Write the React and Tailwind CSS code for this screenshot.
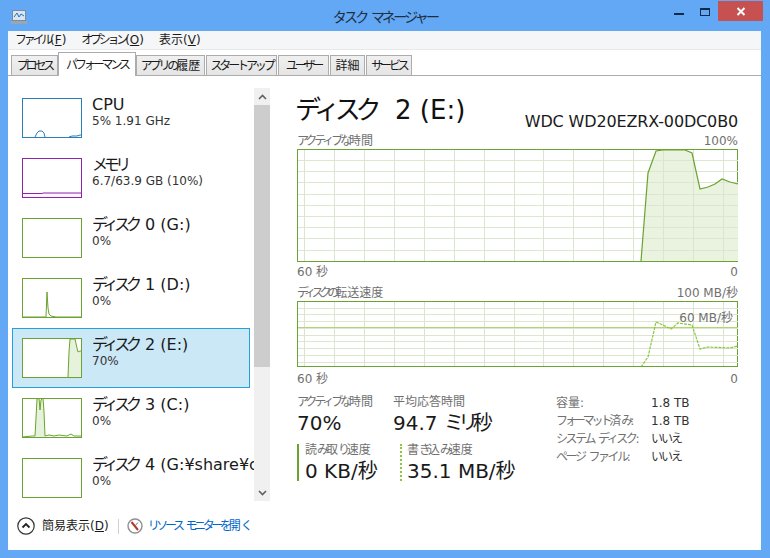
import React from "react";

const FONT = '"DejaVu Sans", "Noto Sans CJK JP", sans-serif';
const DISK = "#6aa32f";

/* The reference's Japanese UI face has condensed kana: tighten only the kana runs. */
function J({ children, cls = "tracking-[-0.26em]" }) {
  const parts = String(children).split(/([\u3040-\u30ff]+)/);
  return (
    <>
      {parts.map((p, i) =>
        i % 2 ? (
          <span key={i} className={cls}>{p}</span>
        ) : (
          <span key={i}>{p}</span>
        )
      )}
    </>
  );
}

const tabs = [
  { t: "プロセス", w: "w-[47px]" },
  { t: "パフォーマンス", w: "w-[78px]", active: true },
  { t: "アプリの履歴", w: "w-[69px]" },
  { t: "スタートアップ", w: "w-[71px]" },
  { t: "ユーザー", w: "w-[51px]" },
  { t: "詳細", w: "w-[35px]" },
  { t: "サービス", w: "w-[46px]" },
];

const items = [
  { n: "CPU", s: "5% 1.91 GHz", c: "#2a7fb5", p: "M13 39 L15 35 L17 33 L20 33 L22 35 L23 39", p2: "M47 39 L50 38 L55 38 L58 37 L60 37" },
  { n: "メモリ", s: "6.7/63.9 GB (10%)", c: "#8e24aa", line: true },
  { n: "ディスク 0 (G:)", s: "0%", c: DISK },
  { n: "ディスク 1 (D:)", s: "0%", c: DISK, p: "M0 39 L22 39 L24 39 L25 14 L26 30 L27 36 L29 38 L34 39 L60 39" },
  { n: "ディスク 2 (E:)", s: "70%", c: DISK, sel: true, p: "M46 39 L47 14 L48 1 L53 1 L55 10 L56 14 L58 13 L60 13", area: "M46 39 L47 14 L48 1 L53 1 L55 10 L56 14 L58 13 L60 13 L60 39 Z" },
  { n: "ディスク 3 (C:)", s: "0%", c: DISK, p: "M0 39 L10 38 L13 38 L14 20 L15 1 L17 0 L18 12 L19 2 L21 0 L22 14 L23 38 L27 37 L32 38 L37 37 L45 38 L49 36 L52 38 L60 38", area: "M13 39 L14 20 L15 1 L17 0 L18 12 L19 2 L21 0 L22 14 L23 39 Z" },
  { n: "ディスク 4 (G:¥share¥c", s: "0%", c: DISK },
];

function Thumb({ it }) {
  return (
    <div className="w-[60px] h-10 border shrink-0 bg-white" style={{ borderColor: it.c }}>
      <svg width="58" height="38" viewBox="1 1 58 38" className="block">
        {it.area && <path d={it.area} fill="#e7f2dd" />}
        {it.p && <path d={it.p} fill="none" stroke={it.c} strokeWidth="1" />}
        {it.p2 && <path d={it.p2} fill="none" stroke={it.c} strokeWidth="1" />}
        {it.line && (
          <>
            <rect x="1" y="35" width="58" height="4" fill="#fbf5fd" />
            <path d="M1 35.5 L20 35.5 L21 35 L59 35" fill="none" stroke={it.c} strokeWidth="1" />
          </>
        )}
      </svg>
    </div>
  );
}

function Item({ it }) {
  return (
    <div className={`w-[238px] h-[60px] flex items-start pl-[10px] pt-[10px] gap-[10px] border ${it.sel ? "bg-[#cbe8f6] border-[#26a0da]" : "border-transparent"}`}>
      <div className="-mt-px -ml-px"><Thumb it={it} /></div>
      <div className="-mt-[4px]">
        <div className="text-[16px] leading-[20px] text-[#1a1a1a] whitespace-nowrap"><J cls="tracking-[-0.27em] mr-[0.15em]">{it.n}</J></div>
        <div className="text-[12px] leading-[13px] text-[#333] whitespace-nowrap">{it.s}</div>
      </div>
    </div>
  );
}

const vLines = Array.from({ length: 15 }, (_, i) => 6.5 + Math.round(i * 29.93));

function Grid({ w, h, hStart, hStep, hCount }) {
  return (
    <>
      {Array.from({ length: hCount }, (_, i) => {
        const y = Math.round(hStart + i * hStep) + 0.5;
        return <line key={i} x1="0" x2={w} y1={y} y2={y} stroke="#dde6cf" />;
      })}
      {vLines.map((x) => (
        <line key={x} x1={x} x2={x} y1="0" y2={h} stroke="#dbe3d2" />
      ))}
    </>
  );
}

function ActiveGraph() {
  const pts = [[641,261],[648,173],[656,151],[663,150],[685,150],[692,153],[700,189],[708,187],[715,184],[722,179],[730,182],[738,184]]
    .map(([x, y]) => `${x - 298},${y - 150}`).join(" L");
  return (
    <div className="h-[113px] border border-[#6aa32f]">
      <svg width="440" height="111" className="block">
        <path d={`M${pts} L440,112 L343,112 Z`} fill="#e9f3df" />
        <Grid w={440} h={111} hStart={10} hStep={11.2} hCount={9} />
        <path d={`M${pts}`} fill="none" stroke="#6aa32f" strokeWidth="1.2" />
      </svg>
    </div>
  );
}

function SpeedGraph() {
  const pts = [[641,367],[648,357],[656,322],[663,325],[671,329],[678,323],[692,325],[700,349],[708,347],[730,348],[738,346]]
    .map(([x, y]) => `${x - 298},${y - 302}`).join(" L");
  return (
    <div className="relative h-[66px] border border-[#6aa32f]">
      <svg width="440" height="64" className="block">
        <Grid w={440} h={64} hStart={5.5} hStep={6.75} hCount={9} />
        <line x1="0" x2="440" y1="25.5" y2="25.5" stroke="#b0d870" />
        <path d={`M${pts}`} fill="none" stroke="#8cc63f" strokeWidth="1.2" strokeDasharray="3 1" />
      </svg>
      <div className="absolute right-[4px] top-[9px] text-[12px] leading-[15px] text-[#707070]">60 MB/秒</div>
    </div>
  );
}

function Stat({ label, value, cls }) {
  return (
    <div>
      <div className="text-[12px] leading-[16px] text-[#707070] whitespace-nowrap"><J>{label}</J></div>
      <div className="text-[20px] leading-[26px] text-[#1a1a1a] whitespace-nowrap"><J cls={cls}>{value}</J></div>
    </div>
  );
}

function Caption({ l, r, cls }) {
  return (
    <div className="flex justify-between text-[12px] leading-[15px] text-[#707070]">
      <span><J cls={cls}>{l}</J></span>
      <span>{r}</span>
    </div>
  );
}

export default function App() {
  return (
    <div className="w-[770px] h-[558px] bg-[#62a8f4] flex flex-col overflow-hidden" style={{ fontFamily: FONT }}>
      {/* title bar */}
      <div className="h-[31px] shrink-0 relative flex justify-center items-start pt-[8px]">
        <svg width="16" height="15" viewBox="0 0 16 15" className="absolute left-[11px] top-[10px]">
          <rect x="1.5" y="0.5" width="13" height="10" fill="#d6e6f5" stroke="#7d8a99" />
          <path d="M3 7 L6 3 L8 7 L10 4 L13 6" fill="none" stroke="#2f6fb0" />
          <rect x="0" y="11" width="16" height="3" fill="#9aa7b3" />
        </svg>
        <div className="text-[14px] leading-[18px] text-[#1f2d3d]"><J cls="tracking-[-0.2em]">タスク マネージャー</J></div>
        <div className="absolute left-[674px] top-[13px] w-[10px] h-[2px] bg-[#0f2a4a]" />
        <div className="absolute left-[700px] top-[8px] w-[10px] h-[8px] border border-[#0f2a4a] border-t-2" />
        <div className="absolute left-[718px] top-[1px] w-[45px] h-[20px] bg-[#c75050] flex items-center justify-center text-white">
          <svg width="10" height="9" viewBox="0 0 10 9">
            <path d="M1.5 1 L8.5 8 M8.5 1 L1.5 8" stroke="#fff" strokeWidth="2" />
          </svg>
        </div>
      </div>

      {/* client */}
      <div className="flex-1 mx-[8px] mb-[8px] bg-white flex flex-col w-[753px] min-h-0">
        <div className="h-[19px] bg-[#f5f6f7] border-b border-[#e8e9ea] flex items-center pl-[7px] gap-[15px] text-[12px] text-[#1a1a1a] shrink-0">
          <span><J cls="tracking-[-0.27em]">ファイル</J>(<u>F</u>)</span>
          <span><J cls="tracking-[-0.27em]">オプション</J>(<u>O</u>)</span>
          <span>表示(<u>V</u>)</span>
        </div>
        {/* tabs */}
        <div className="h-[26px] flex items-end pl-[3px] gap-px shrink-0 border-b border-[#acacac]">
          {tabs.map((t) => (
            <div
              key={t.t}
              className={`${t.w} flex items-center justify-center text-[12px] whitespace-nowrap text-[#1a1a1a] border border-[#acacac] border-b-0 ${
                t.active ? "h-[24px] bg-white relative top-px -mx-px z-10" : "h-[20px] bg-gradient-to-b from-[#f0f0f0] to-[#e5e5e5]"
              }`}
            >
              <J>{t.t}</J>
            </div>
          ))}
        </div>

        {/* body */}
        <div className="flex-1 flex min-h-0">
          {/* sidebar */}
          <div className="w-[262px] shrink-0 pl-[4px] pt-[12px] flex">
            <div className="w-[242px] h-[420px] overflow-hidden shrink-0">
              {items.map((it) => (
                <Item key={it.n} it={it} />
              ))}
            </div>
            <div className="w-[16px] h-[413px] bg-[#f0f0f0] flex flex-col shrink-0">
              <div className="h-[17px] flex items-center justify-center">
                <svg width="9" height="6" viewBox="0 0 9 6"><path d="M1 5 L4.5 1.5 L8 5" fill="none" stroke="#606060" strokeWidth="1.6" /></svg>
              </div>
              <div className="h-[262px] bg-[#cdcdcd]" />
              <div className="flex-1" />
              <div className="h-[17px] flex items-center justify-center">
                <svg width="9" height="6" viewBox="0 0 9 6"><path d="M1 1 L4.5 4.5 L8 1" fill="none" stroke="#606060" strokeWidth="1.6" /></svg>
              </div>
            </div>
          </div>

          {/* main */}
          <div className="flex-1 pl-[27px] pr-[23px] min-w-0">
            <div className="flex justify-between items-end h-[58px] pt-[4px]">
              <div className="text-[26px] leading-[36px] text-[#111] whitespace-nowrap -ml-[2px] mb-[6px]"><J cls="tracking-[-0.2em] mr-[0.4em]">ディスク 2 (E:)</J></div>
              <div className="text-[16px] leading-[22px] tracking-[-0.15px] text-[#1a1a1a] whitespace-nowrap mb-[1px]">WDC WD20EZRX-00DC0B0</div>
            </div>
            <Caption l="アクティブな時間" r="100%" />
            <ActiveGraph />
            <div className="mt-[3px]"><Caption l="60 秒" r="0" /></div>
            <div className="mt-[6px]"><Caption l="ディスクの転送速度" r="100 MB/秒" cls="tracking-[-0.35em]" /></div>
            <SpeedGraph />
            <div className="mt-[5px]"><Caption l="60 秒" r="0" /></div>

            <div className="flex mt-[7px]">
              <div className="w-[259px]">
                <div className="flex">
                  <div className="w-[96px]"><Stat label="アクティブな時間" value="70%" /></div>
                  <Stat label="平均応答時間" value="94.7 ミリ秒" cls="tracking-[-0.28em]" />
                </div>
                <div className="flex mt-[8px]">
                  <div className="w-[103px] border-l-[2px] border-[#6aa32f] pl-[6px] h-[37px]"><div className="-mt-[2px]"><Stat label="読み取り速度" value="0 KB/秒" /></div></div>
                  <div className="border-l-[2px] border-dotted border-[#8cc63f] pl-[5px] h-[37px]"><div className="-mt-[2px]"><Stat label="書き込み速度" value="35.1 MB/秒" /></div></div>
                </div>
              </div>
              <div className="grid grid-cols-[95px_auto] text-[12px] leading-[18px] whitespace-nowrap w-[180px] content-start">
                <span className="text-[#707070]">容量:</span><span className="text-[#333]">1.8 TB</span>
                <span className="text-[#707070]"><J>フォーマット</J>済<J>み</J>:</span><span className="text-[#333]">1.8 TB</span>
                <span className="text-[#707070]"><J cls="tracking-[-0.2em]">システム ディスク</J>:</span><span className="text-[#333]"><J cls="tracking-[-0.17em]">いいえ</J></span>
                <span className="text-[#707070]"><J cls="tracking-[-0.2em]">ページ ファイル</J>:</span><span className="text-[#333]"><J cls="tracking-[-0.17em]">いいえ</J></span>
              </div>
            </div>
          </div>
        </div>

        {/* footer */}
        <div className="h-[39px] shrink-0 flex items-center pl-[9px] pb-[9px]">
          <svg width="18" height="18" viewBox="0 0 18 18">
            <circle cx="9" cy="9" r="8.2" fill="#fff" stroke="#333" strokeWidth="1.2" />
            <path d="M5.5 10.5 L9 7 L12.5 10.5" fill="none" stroke="#222" strokeWidth="1.8" />
          </svg>
          <span className="text-[12px] text-[#1a1a1a] ml-[7px] whitespace-nowrap">簡易表示(<u>D</u>)</span>
          <div className="w-px h-[15px] bg-[#d0d0d0] ml-[9px]" />
          <svg width="16" height="16" viewBox="0 0 16 16" className="ml-[8px]">
            <circle cx="8" cy="8" r="7" fill="#fff" stroke="#8f8f8f" strokeWidth="1.4" />
            <path d="M4.5 4 L11 12" stroke="#b8342c" strokeWidth="2" />
            <path d="M11 4.5 L8 8" stroke="#777" strokeWidth="1" />
          </svg>
          <span className="text-[12px] text-[#0066cc] ml-[5px] whitespace-nowrap"><J cls="tracking-[-0.28em]">リソース モニターを開く</J></span>
        </div>
      </div>
    </div>
  );
}
